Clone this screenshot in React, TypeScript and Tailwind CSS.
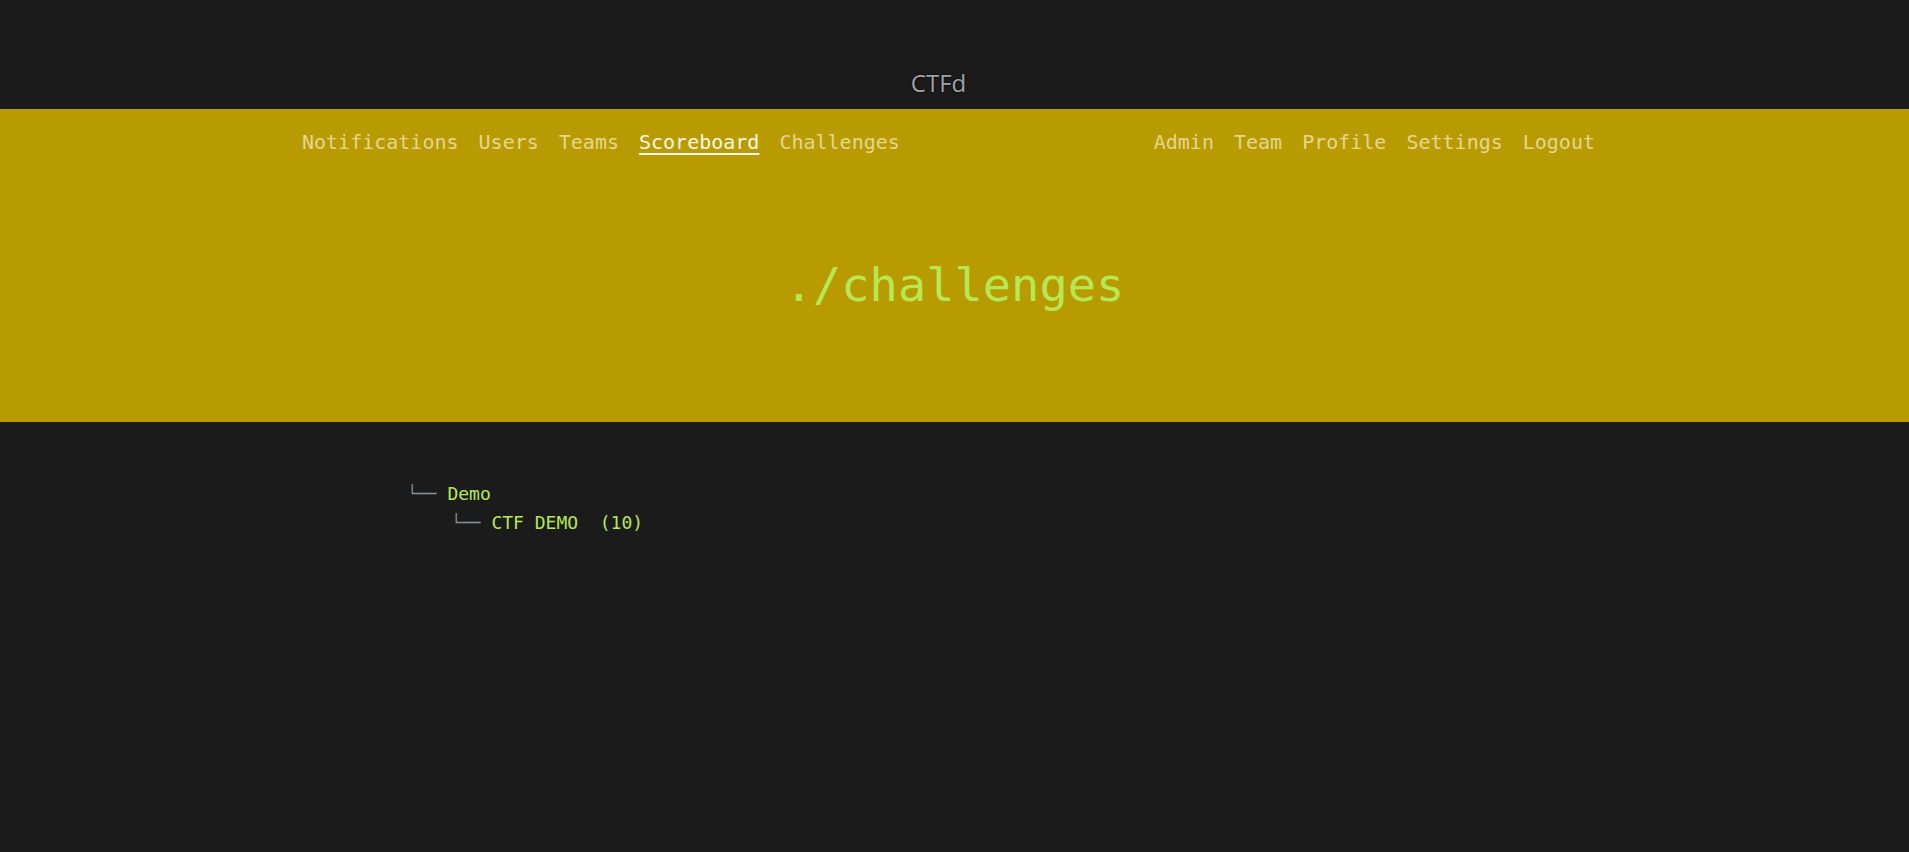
const leftLinks = ['Notifications', 'Users', 'Teams', 'Scoreboard', 'Challenges'];
const rightLinks = ['Admin', 'Team', 'Profile', 'Settings', 'Logout'];

const mono = "font-['DejaVu_Sans_Mono','Liberation_Mono',monospace]";

function TreeRow({ indent, label }: { indent: boolean; label: string }) {
  return (
    <div className={`flex items-center h-[29px] ${indent ? 'pl-[44px]' : ''}`}>
      <span className="text-[16px] leading-[29px] text-[#8a8f98]">└──</span>
      <span className="ml-[11px] text-[18px] leading-[29px] text-[#b5e853] whitespace-pre">{label}</span>
    </div>
  );
}

export default function App() {
  return (
    <div className={`min-h-[852px] bg-[#1b1b1b] ${mono}`}>
      <header className="h-[109px] flex items-end justify-center pb-[10px] pr-[32px]">
        <span className="font-['Open_Sans',sans-serif] text-[24px] leading-8 text-[#9ea3a8] [text-shadow:0_0_2px_#000]">
          CTFd
        </span>
      </header>

      <section className="h-[313px] bg-[#b89b00] flex flex-col">
        <nav className="mx-auto w-[1305px] pr-[12px] pt-[19px] flex justify-between text-[20px] leading-[28px]">
          <ul className="flex gap-5">
            {leftLinks.map((link) => (
              <li key={link}>
                <a
                  className={
                    link === 'Scoreboard'
                      ? 'text-[#fbf7e4] underline underline-offset-[4px]'
                      : 'text-[#e6d68e]'
                  }
                >
                  {link}
                </a>
              </li>
            ))}
          </ul>
          <ul className="flex gap-5">
            {rightLinks.map((link) => (
              <li key={link}>
                <a className="text-[#e6d68e]">{link}</a>
              </li>
            ))}
          </ul>
        </nav>
        <h1 className="mt-[105px] text-center text-[47px] leading-none text-[#b5e853]">./challenges</h1>
      </section>

      <main className="mx-auto w-[1110px] pl-[8px] pt-[57px]">
        <TreeRow indent={false} label="Demo" />
        <TreeRow indent label="CTF DEMO  (10)" />
      </main>
    </div>
  );
}
